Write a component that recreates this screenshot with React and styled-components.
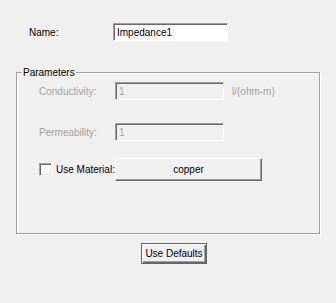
import styled, { createGlobalStyle } from "styled-components"

const Global = createGlobalStyle`
  html, body {
    margin: 0;
    background: #f0f0f0;
  }
  body {
    font-family: "Liberation Sans", Arial, sans-serif;
    font-size: 10px;
    color: #000;
  }
`

export default function App() {
  return (
    <Page>
      <Global />
      <NameRow>
        <Label width={84}>Name:</Label>
        <TextBox value="Impedance1" readOnly width={115} />
      </NameRow>

      <Group>
        <Legend>Parameters</Legend>
        <Row>
          <Label width={76} disabled>Conductivity:</Label>
          <TextBox value="1" readOnly disabled width={109} />
          <Unit>l/(ohm-m)</Unit>
        </Row>
        <Row gap={23}>
          <Label width={76} disabled>Permeability:</Label>
          <TextBox value="1" readOnly disabled width={109} />
        </Row>
        <Row gap={17}>
          <CheckLabel>
            <CheckBox />
            <span>Use Material:</span>
          </CheckLabel>
          <Button width={147} height={23}>copper</Button>
        </Row>
      </Group>

      <Footer>
        <DefaultButton>Use Defaults</DefaultButton>
      </Footer>
    </Page>
  )
}

const Page = styled.div`
  width: 336px;
  height: 303px;
  padding-top: 23px;
  box-sizing: border-box;
`

const NameRow = styled.div`
  display: flex;
  align-items: center;
  padding-left: 29px;
`

const Label = styled.span`
  width: ${p => p.width}px;
  flex-shrink: 0;
  white-space: nowrap;
  color: ${p => (p.disabled ? "#a0a0a0" : "#000")};
`

const TextBox = styled.input`
  width: ${p => p.width}px;
  height: 18px;
  box-sizing: border-box;
  margin: 0;
  padding: 0 0 0 3px;
  font: inherit;
  color: ${p => (p.disabled ? "#a0a0a0" : "#000")};
  background: ${p => (p.disabled ? "#f0f0f0" : "#fff")};
  border: 1px solid;
  border-color: #a0a0a0 #fff #fff #a0a0a0;
  box-shadow: inset 1px 1px 0 #696969;
  outline: none;
`

const Group = styled.div`
  position: relative;
  margin: 31px 0 0 16px;
  width: 304px;
  height: 162px;
  box-sizing: border-box;
  border: 1px solid #a0a0a0;
  box-shadow: inset 1px 1px 0 #fff, 1px 1px 0 #fff;
  padding: 9px 0 0 22px;
`

const Legend = styled.span`
  position: absolute;
  top: -7px;
  left: 5px;
  padding: 0 1px;
  background: #f0f0f0;
  line-height: 13px;
`

const Row = styled.div`
  display: flex;
  align-items: center;
  margin-top: ${p => p.gap || 0}px;
`

const Unit = styled.span`
  margin-left: 8px;
  color: #a0a0a0;
  white-space: nowrap;
`

const CheckLabel = styled.label`
  width: 76px;
  display: flex;
  align-items: center;
  gap: 4px;
  white-space: nowrap;
`

const CheckBox = styled.span`
  width: 13px;
  height: 13px;
  flex-shrink: 0;
  box-sizing: border-box;
  background: #fff;
  border: 1px solid;
  border-color: #a0a0a0 #fff #fff #a0a0a0;
  box-shadow: inset 1px 1px 0 #696969, inset -1px -1px 0 #e3e3e3;
`

const Button = styled.button`
  width: ${p => p.width}px;
  height: ${p => p.height}px;
  box-sizing: border-box;
  margin: 0;
  padding: 0;
  font: inherit;
  color: #000;
  background: #f0f0f0;
  border: 1px solid;
  border-color: #fff #696969 #696969 #fff;
  box-shadow: inset -1px -1px 0 #a0a0a0;
`

const Footer = styled.div`
  display: flex;
  padding: 9px 0 0 141px;
`

const DefaultButton = styled.button`
  width: 66px;
  height: 21px;
  box-sizing: border-box;
  margin: 0;
  padding: 0;
  font: inherit;
  color: #000;
  background: #f0f0f0;
  border: 1px solid #646464;
  box-shadow: inset 1px 1px 0 #fff, inset -1px -1px 0 #696969, inset -2px -2px 0 #a0a0a0;
`
